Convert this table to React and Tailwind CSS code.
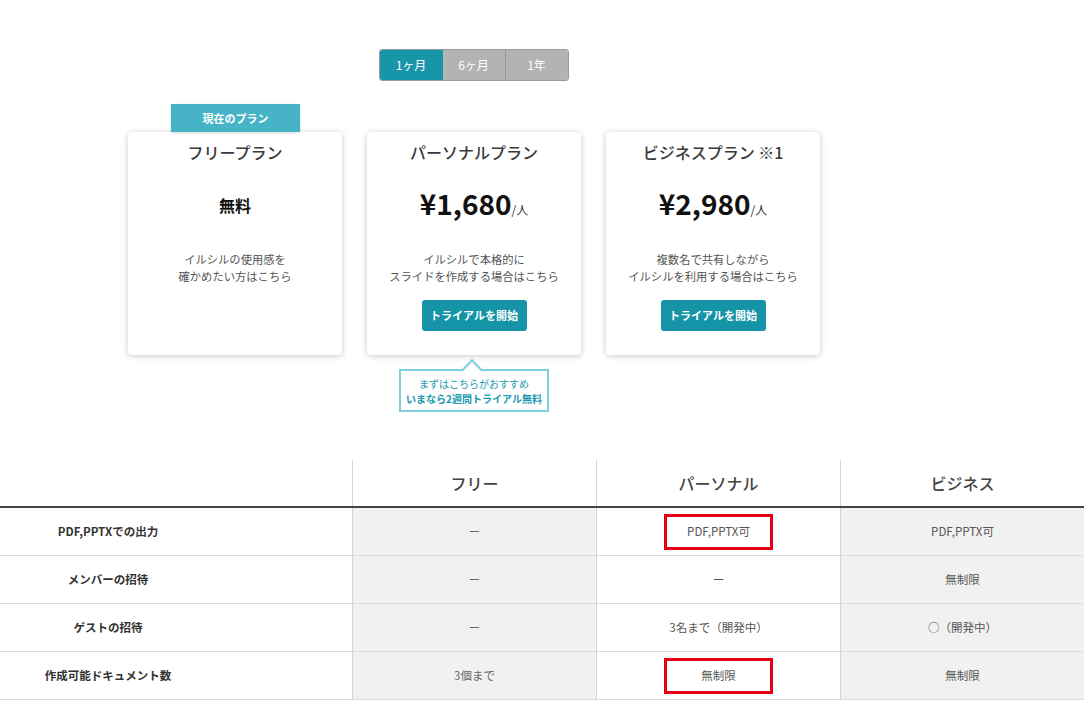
import React from "react";

const font = { fontFamily: '"Noto Sans CJK JP", "Noto Sans", sans-serif' };

function Card({ title, price, free, desc, button, badge }) {
  return (
    <div className="relative w-[214px] h-[223px] bg-white rounded-[4px] shadow-[0_1px_6px_rgba(0,0,0,0.22)] flex flex-col items-center">
      {badge && (
        <div className="absolute -top-[28px] left-[43px] w-[129px] h-[28px] bg-[#46b4c6] shadow-[0_1px_3px_rgba(0,0,0,0.15)] flex items-center justify-center text-white text-[11px] font-bold">
          {badge}
        </div>
      )}
      <div className="mt-[8px] h-[24px] leading-[24px] text-[16px] font-medium text-[#3a3a3a]">{title}</div>
      {free ? (
        <div className="mt-[22px] h-[38px] leading-[38px] text-[16px] font-bold text-[#111]">{free}</div>
      ) : (
        <div className="mt-[20px] h-[38px] flex items-baseline leading-[38px]">
          <span className="text-[28px] font-bold text-[#111]">{price}</span>
          <span className="text-[12px] text-[#333]">/人</span>
        </div>
      )}
      <div className={`${free ? "mt-[27px]" : "mt-[29px]"} text-[11.3px] leading-[17px] text-[#555] text-center whitespace-pre-line`}>{desc}</div>
      {button && (
        <button className="mt-[15px] w-[105px] h-[31px] rounded-[3px] bg-[#1594a7] text-white text-[11px] font-bold">
          トライアルを開始
        </button>
      )}
    </div>
  );
}

const rows = [
  ["PDF,PPTXでの出力", "ー", "PDF,PPTX可", "PDF,PPTX可", true],
  ["メンバーの招待", "ー", "ー", "無制限", false],
  ["ゲストの招待", "ー", "3名まで（開発中）", "○（開発中）", false],
  ["作成可能ドキュメント数", "3個まで", "無制限", "無制限", true],
];

export default function App() {
  return (
    <div className="w-[1088px] h-[702px] overflow-hidden bg-white" style={font}>
      <div className="ml-[128px] w-[692px] pt-[49px] flex flex-col">
        <div className="self-center ml-[-1px] flex h-[32px] rounded-[3px] border border-[#9a9a9a] overflow-hidden text-[12px] text-white">
          <div className="w-[63px] flex items-center justify-center bg-[#1796aa]">1ヶ月</div>
          <div className="w-[63px] flex items-center justify-center bg-[#b3b3b3] border-r border-[#999]">6ヶ月</div>
          <div className="w-[62px] flex items-center justify-center bg-[#b3b3b3]">1年</div>
        </div>
        <div className="mt-[51px] flex gap-[25px] items-start">
          <Card title="フリープラン" free="無料" desc={"イルシルの使用感を\n確かめたい方はこちら"} badge="現在のプラン" />
          <div className="flex flex-col items-center">
            <Card title="パーソナルプラン" price="¥1,680" desc={"イルシルで本格的に\nスライドを作成する場合はこちら"} button />
            <div className="relative mt-[14px] w-[150px] h-[43px] border-2 border-[#7dcfdb] bg-white flex flex-col items-center justify-center text-[10px] leading-[15px] text-[#1a9ab0]">
              <div className="absolute -top-[9px] left-[64px] w-[14px] h-[14px] bg-white border-l-2 border-t-2 border-[#7dcfdb] rotate-45"></div>
              <span className="relative">まずはこちらがおすすめ</span>
              <span className="relative font-bold">いまなら2週間トライアル無料</span>
            </div>
          </div>
          <Card title="ビジネスプラン ※1" price="¥2,980" desc={"複数名で共有しながら\nイルシルを利用する場合はこちら"} button />
        </div>
      </div>

      <div className="mt-[48px] w-[1084px]">
        <div className="flex h-[48px] border-b-2 border-[#444]">
          <div className="w-[352px]"></div>
          {["フリー", "パーソナル", "ビジネス"].map((h) => (
            <div
              key={h}
              className="w-[244px] flex items-center justify-center text-[16px] font-medium text-[#444] border-l border-[#d4d4d4]"
            >
              {h}
            </div>
          ))}
        </div>
        {rows.map(([label, a, b, c, boxed]) => (
          <div key={label} className="flex h-[48px] border-b border-[#dcdcdc]">
            <div className="w-[352px] pr-[136px] flex items-center justify-center text-[11.5px] font-bold text-[#333]">{label}</div>
            <div className="w-[244px] flex items-center justify-center bg-[#f1f1f1] border-l border-[#d4d4d4] text-[11.5px] text-[#666]">{a}</div>
            <div className="w-[244px] flex items-center justify-center bg-white border-l border-[#d4d4d4] text-[11.5px] text-[#555]">
              {boxed ? (
                <div className="w-[109px] h-[36px] border-[3px] border-[#e50012] flex items-center justify-center">{b}</div>
              ) : (
                b
              )}
            </div>
            <div className="w-[244px] flex items-center justify-center bg-[#f1f1f1] border-l border-[#d4d4d4] text-[11.5px] text-[#555]">{c}</div>
          </div>
        ))}
      </div>
    </div>
  );
}
